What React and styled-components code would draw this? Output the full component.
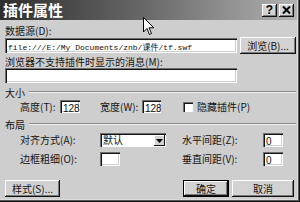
import React from 'react';
import styled, { createGlobalStyle } from 'styled-components';

const Global = createGlobalStyle`
  html, body { margin: 0; padding: 0; background: #cecece; }
  body { width: 300px; height: 202px; overflow: hidden; font-family: "Noto Sans CJK SC", "Noto Sans", sans-serif; }
`;

const Window = styled.div`
  position: relative;
  width: 300px;
  height: 202px;
  box-sizing: border-box;
  background: #cecece;
  box-shadow: inset -1px -1px #111, inset -2px -2px #5a5a5a, inset -3px -3px #dcdcdc;
  display: flex;
  flex-direction: column;
`;

const TitleBar = styled.div`
  height: 20px;
  margin-right: 3px;
  background: linear-gradient(to right, #2e2e2e 0%, #6a6a6a 50%, #b2b2b2 100%);
  display: flex;
  align-items: center;
  padding-left: 3px;
`;

const Title = styled.div`
  color: #fff;
  font-weight: 700;
  font-size: 15px;
  line-height: 18px;
  flex: 1;
`;

const CapButton = styled.div`
  width: 15px;
  height: 13px;
  margin-right: ${p => p.$mr || 0}px;
  background: #d4d4d4;
  box-shadow: inset -1px -1px #111, inset 1px 1px #fff, inset -2px -2px #7a7a7a;
  display: flex;
  align-items: center;
  justify-content: center;
  font-family: "Liberation Sans", sans-serif;
  font-weight: 700;
  font-size: 12px;
  color: #000;
  line-height: 1;
`;

const Body = styled.div`
  padding: 0 4px 0 5px;
  display: flex;
  flex-direction: column;
`;

const Label = styled.div`
  font-size: 10px;
  line-height: 12px;
  height: 12px;
  color: #151515;
  white-space: nowrap;
  margin-top: ${p => p.$mt || 0}px;
  margin-left: ${p => p.$ml || 0}px;
  width: ${p => (p.$w ? p.$w + 'px' : 'auto')};
  flex-shrink: 0;
`;

const Row = styled.div`
  display: flex;
  align-items: center;
  height: ${p => p.$h}px;
  margin-top: ${p => p.$mt || 0}px;
  padding-left: ${p => p.$pl || 0}px;
`;

const Field = styled.div`
  box-sizing: border-box;
  width: ${p => p.$w}px;
  height: ${p => p.$h || 14}px;
  margin-left: ${p => p.$ml || 0}px;
  background: #fff;
  box-shadow: inset 1px 1px #6e6e6e, inset 2px 2px #151515, inset -1px -1px #fff, inset -2px -2px #cfcfcf;
  padding: 2px 0 0 3px;
  font-size: 10px;
  line-height: 11px;
  color: #111;
  white-space: nowrap;
  overflow: hidden;
  flex-shrink: 0;
`;

const PathText = styled.span`
  font-family: "Liberation Mono", "Noto Sans CJK SC", monospace;
  font-size: 8px;
  line-height: 11px;
`;

const NumText = styled.span`
  font-family: "Liberation Sans", sans-serif;
  font-size: 10px;
`;

const Button = styled.div`
  box-sizing: border-box;
  width: ${p => p.$w}px;
  height: 17px;
  margin-left: ${p => p.$ml || 0}px;
  background: #d2d2d2;
  box-shadow: ${p =>
    p.$default
      ? 'inset 0 0 0 1px #000, inset -2px -2px #111, inset 2px 2px #fff, inset -3px -3px #7a7a7a'
      : 'inset -1px -1px #111, inset 1px 1px #fff, inset -2px -2px #7a7a7a'};
  display: flex;
  align-items: center;
  justify-content: center;
  font-size: 10px;
  color: #151515;
  white-space: nowrap;
  flex-shrink: 0;
`;

const Section = styled.div`
  display: flex;
  align-items: center;
  height: 12px;
  margin-top: ${p => p.$mt}px;
  font-size: 10px;
  color: #151515;
  &::after {
    content: '';
    flex: 1;
    margin-left: 4px;
    height: 0;
    border-top: 1px solid #8a8a8a;
    border-bottom: 1px solid #f2f2f2;
  }
`;

const CheckBox = styled.div`
  width: 10px;
  height: 10px;
  margin-left: ${p => p.$ml}px;
  margin-right: 4px;
  background: #fff;
  box-shadow: inset 1px 1px #6e6e6e, inset 2px 2px #151515, inset -1px -1px #fff;
  flex-shrink: 0;
`;

const Grid = styled.div`
  display: grid;
  grid-template-columns: 80px 82px 81px 20px;
  grid-template-rows: 14px 14px;
  row-gap: 5px;
  align-items: center;
  padding-left: 15px;
  margin-top: 3px;
`;

const Select = styled.div`
  box-sizing: border-box;
  width: 66px;
  height: 14px;
  background: #fff;
  box-shadow: inset 1px 1px #6e6e6e, inset 2px 2px #151515, inset -1px -1px #fff;
  display: flex;
  align-items: stretch;
  padding: 2px 1px 1px 2px;
  font-size: 10px;
  line-height: 10px;
  color: #111;
`;

const SelectText = styled.div`
  flex: 1;
  padding-left: 1px;
`;

const SelectArrow = styled.div`
  width: 11px;
  background: #d2d2d2;
  box-shadow: inset -1px -1px #111, inset 1px 1px #fff;
  display: flex;
  align-items: center;
  justify-content: center;
`;

const Footer = styled.div`
  display: flex;
  align-items: center;
  height: 17px;
  margin-top: 14px;
  padding-right: 2px;
`;

const Spacer = styled.div`
  flex: 1;
`;

const Cursor = styled.svg`
  position: absolute;
  left: 143px;
  top: 17px;
`;

export default function App() {
  return (
    <>
      <Global />
      <Window>
        <TitleBar>
          <Title>插件属性</Title>
          <CapButton $mr={2}>?</CapButton>
          <CapButton $mr={3}>
            <svg width="9" height="8" viewBox="0 0 9 8">
              <path d="M1 0.5 L8 7.5 M8 0.5 L1 7.5" stroke="#000" strokeWidth="2" />
            </svg>
          </CapButton>
        </TitleBar>
        <Body>
          <Label $mt={5}>数据源(D):</Label>
          <Row $h={17}>
            <Field $w={232} $h={15}>
              <PathText>file:///E:/My Documents/znb/课件/tf.swf</PathText>
            </Field>
            <Button $w={56} $ml={3}>浏览(B)...</Button>
          </Row>
          <Label $mt={2}>浏览器不支持插件时显示的消息(M):</Label>
          <Row $h={15}>
            <Field $w={232} $h={15} />
          </Row>
          <Section $mt={3}>大小</Section>
          <Row $h={13} $mt={2} $pl={15}>
            <Label $w={40}>高度(T):</Label>
            <Field $w={20} $h={13}><NumText>128</NumText></Field>
            <Label $w={42} $ml={20}>宽度(W):</Label>
            <Field $w={19} $h={13}><NumText>128</NumText></Field>
            <CheckBox $ml={22} />
            <Label>隐藏插件(P)</Label>
          </Row>
          <Section $mt={5}>布局</Section>
          <Grid>
            <Label>对齐方式(A):</Label>
            <Select>
              <SelectText>默认</SelectText>
              <SelectArrow>
                <svg width="7" height="4" viewBox="0 0 7 4"><path d="M0 0h7L3.5 4z" fill="#000" /></svg>
              </SelectArrow>
            </Select>
            <Label>水平间距(Z):</Label>
            <Field $w={20} $h={14}><NumText>0</NumText></Field>
            <Label>边框粗细(O):</Label>
            <Field $w={20} $h={14} />
            <Label>垂直间距(V):</Label>
            <Field $w={20} $h={14}><NumText>0</NumText></Field>
          </Grid>
          <Footer>
            <Button $w={55}>样式(S)...</Button>
            <Spacer />
            <Button $w={46} $default>确定</Button>
            <Button $w={62} $ml={3}>取消</Button>
          </Footer>
        </Body>
        <Cursor width="12" height="19" viewBox="0 0 12 19">
          <path d="M0.5 0.5 L0.5 15 L4 11.5 L6.5 17.5 L8.5 16.5 L6 10.8 L10.8 10.8 Z" fill="#fff" stroke="#000" strokeWidth="1" />
        </Cursor>
      </Window>
    </>
  );
}
